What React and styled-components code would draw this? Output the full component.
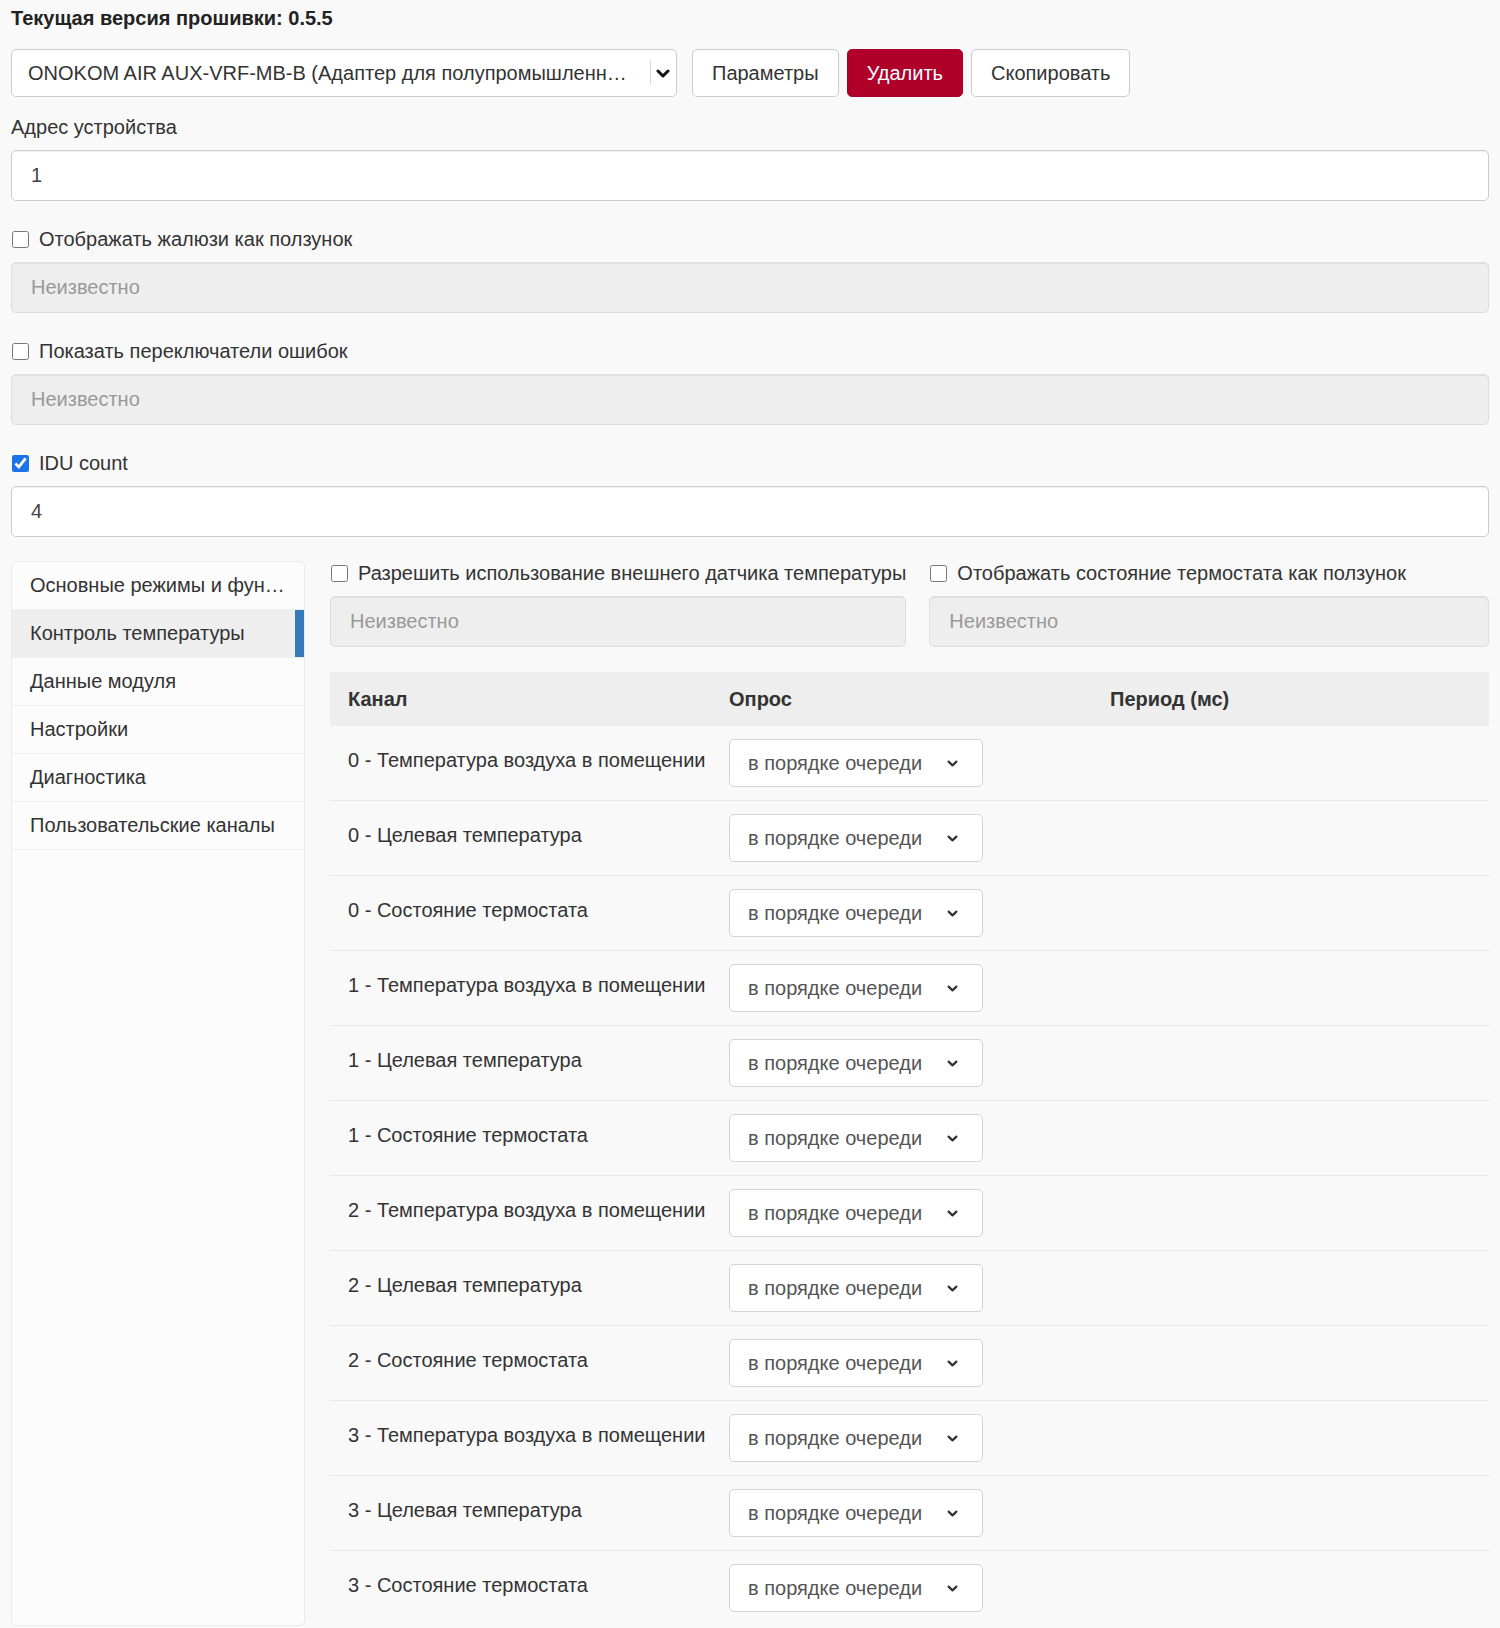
import React from 'react';
import styled, { createGlobalStyle } from 'styled-components';

const GlobalStyle = createGlobalStyle`
  html, body { margin: 0; padding: 0; background: #f9f9f9; }
  body {
    font-family: "Liberation Sans", Arial, sans-serif;
    font-size: 20px;
    line-height: 28px;
    color: #333;
  }
  *, *::before, *::after { box-sizing: border-box; }
`;

const Page = styled.div`
  padding: 4px 11px 2px 11px;
`;

const Title = styled.div`
  font-weight: bold;
  line-height: 28px;
  color: #222;
`;

const Toolbar = styled.div`
  display: flex;
  align-items: center;
  gap: 8px;
  margin-top: 17px;
`;

const DeviceSelect = styled.div`
  width: 666px;
  height: 48px;
  border: 1px solid #ccc;
  border-radius: 5px;
  background: #fff;
  display: flex;
  align-items: center;
  padding-left: 16px;
  margin-right: 7px;
`;

const SelectText = styled.span`
  flex: 1;
  min-width: 0;
  white-space: nowrap;
  overflow: hidden;
  text-overflow: ellipsis;
  color: #333;
  padding-right: 22px;
`;

const Separator = styled.span`
  width: 1px;
  height: 24px;
  background: #d6d6d6;
`;

const ChevronBox = styled.span`
  display: flex;
  align-items: center;
  justify-content: center;
  width: ${(p) => p.$w}px;
  margin: ${(p) => p.$m};
`;

const Button = styled.button`
  height: 48px;
  padding: 0 19px;
  border: 1px solid ${(p) => (p.$danger ? '#a80028' : '#ccc')};
  border-radius: 5px;
  background: ${(p) => (p.$danger ? '#b0002a' : '#fff')};
  color: ${(p) => (p.$danger ? '#fff' : '#333')};
  font-family: inherit;
  font-size: 20px;
  line-height: 28px;
  cursor: pointer;
`;

const Block = styled.div`
  margin-top: ${(p) => p.$top || 0}px;
  margin-bottom: ${(p) => (p.$bottom != null ? p.$bottom : 24)}px;
`;

const FieldLabel = styled.div`
  line-height: 28px;
  margin-bottom: 9px;
`;

const CheckLabel = styled.label`
  display: flex;
  align-items: center;
  gap: 10px;
  line-height: 28px;
  margin-bottom: 9px;
  white-space: nowrap;
`;

const CheckBox = styled.input`
  width: 17px;
  height: 17px;
  margin: 0 0 0 1px;
  accent-color: #1a73e8;
`;

const TextInput = styled.input`
  display: block;
  width: 100%;
  height: 51px;
  padding: 0 19px;
  border: 1px solid ${(p) => (p.disabled ? '#ddd' : '#ccc')};
  border-radius: 5px;
  background: ${(p) => (p.disabled ? '#eee' : '#fff')};
  color: #444;
  font-family: inherit;
  font-size: 20px;
  box-shadow: inset 0 1px 1px rgba(0, 0, 0, 0.06);
  outline: none;
  &::placeholder { color: #999; }
`;

const Lower = styled.div`
  display: flex;
  align-items: stretch;
  gap: 25px;
`;

const Sidebar = styled.nav`
  width: 294px;
  flex: none;
  margin-top: 2px;
  border: 1px solid #ebebeb;
  border-radius: 5px;
  background: #fcfcfc;
  overflow: hidden;
`;

const NavItem = styled.div`
  height: 48px;
  line-height: 47px;
  padding: 0 18px;
  border-bottom: 1px solid #eee;
  white-space: nowrap;
  overflow: hidden;
  text-overflow: ellipsis;
  background: ${(p) => (p.$active ? '#eee' : 'transparent')};
  box-shadow: ${(p) => (p.$active ? 'inset -9px 0 0 #337ab7' : 'none')};
`;

const RightCol = styled.div`
  flex: 1;
  min-width: 0;
`;

const OptionsRow = styled.div`
  display: flex;
  gap: 23px;
`;

const OptionGroup = styled.div`
  flex: ${(p) => (p.$grow ? '1' : 'none')};
  min-width: 0;
`;

const Table = styled.div`
  margin-top: 25px;
`;

const HeadRow = styled.div`
  display: grid;
  grid-template-columns: 381px 381px 1fr;
  height: 54px;
  padding-bottom: 1px;
  align-items: center;
  background: #eee;
  font-weight: bold;
`;

const HeadCell = styled.div`
  padding: 0 18px;
`;

const Row = styled.div`
  display: grid;
  grid-template-columns: 381px 381px 1fr;
  height: 75px;
  border-bottom: 1px solid #e8e8e8;
  &:last-child { border-bottom: none; }
`;

const NameCell = styled.div`
  padding: 20px 18px 0;
  white-space: nowrap;
`;

const PollCell = styled.div`
  padding: 13px 18px 0;
`;

const PollSelect = styled.div`
  width: 254px;
  height: 48px;
  border: 1px solid #d4d4d4;
  border-radius: 5px;
  background: #fff;
  display: flex;
  align-items: center;
  justify-content: space-between;
  padding: 0 24px 0 18px;
  color: #555;
`;

const Chevron = ({ w, h, sw, color }) => (
  <svg width={w} height={h} viewBox={`0 0 ${w} ${h}`} fill="none">
    <polyline
      points={`${sw / 2 + 0.5},${sw / 2 + 0.5} ${w / 2},${h - sw / 2 - 0.5} ${w - sw / 2 - 0.5},${sw / 2 + 0.5}`}
      stroke={color}
      strokeWidth={sw}
      strokeLinecap="round"
      strokeLinejoin="round"
    />
  </svg>
);

const navItems = [
  'Основные режимы и функции',
  'Контроль температуры',
  'Данные модуля',
  'Настройки',
  'Диагностика',
  'Пользовательские каналы',
];

const channelNames = [
  'Температура воздуха в помещении',
  'Целевая температура',
  'Состояние термостата',
];

const channels = [0, 1, 2, 3].flatMap((i) => channelNames.map((n) => `${i} - ${n}`));

export default function App() {
  return (
    <>
      <GlobalStyle />
      <Page>
        <Title>Текущая версия прошивки: 0.5.5</Title>
        <Toolbar>
          <DeviceSelect>
            <SelectText>ONOKOM AIR AUX-VRF-MB-B (Адаптер для полупромышленных кондиционеров)</SelectText>
            <Separator />
            <ChevronBox $w={14} $m="0 6px 0 5px">
              <Chevron w={14} h={9} sw={3} color="#111" />
            </ChevronBox>
          </DeviceSelect>
          <Button>Параметры</Button>
          <Button $danger>Удалить</Button>
          <Button>Скопировать</Button>
        </Toolbar>

        <Block $top={16}>
          <FieldLabel>Адрес устройства</FieldLabel>
          <TextInput defaultValue="1" />
        </Block>
        <Block>
          <CheckLabel><CheckBox type="checkbox" />Отображать жалюзи как ползунок</CheckLabel>
          <TextInput disabled placeholder="Неизвестно" />
        </Block>
        <Block>
          <CheckLabel><CheckBox type="checkbox" />Показать переключатели ошибок</CheckLabel>
          <TextInput disabled placeholder="Неизвестно" />
        </Block>
        <Block $bottom={22}>
          <CheckLabel><CheckBox type="checkbox" defaultChecked />IDU count</CheckLabel>
          <TextInput defaultValue="4" />
        </Block>

        <Lower>
          <Sidebar>
            {navItems.map((t, i) => (
              <NavItem key={t} $active={i === 1}>{t}</NavItem>
            ))}
          </Sidebar>
          <RightCol>
            <OptionsRow>
              <OptionGroup>
                <CheckLabel><CheckBox type="checkbox" />Разрешить использование внешнего датчика температуры</CheckLabel>
                <TextInput disabled placeholder="Неизвестно" />
              </OptionGroup>
              <OptionGroup $grow>
                <CheckLabel><CheckBox type="checkbox" />Отображать состояние термостата как ползунок</CheckLabel>
                <TextInput disabled placeholder="Неизвестно" />
              </OptionGroup>
            </OptionsRow>
            <Table>
              <HeadRow>
                <HeadCell>Канал</HeadCell>
                <HeadCell>Опрос</HeadCell>
                <HeadCell>Период (мс)</HeadCell>
              </HeadRow>
              {channels.map((c) => (
                <Row key={c}>
                  <NameCell>{c}</NameCell>
                  <PollCell>
                    <PollSelect>
                      <span>в порядке очереди</span>
                      <Chevron w={11} h={7} sw={2.2} color="#333" />
                    </PollSelect>
                  </PollCell>
                  <div />
                </Row>
              ))}
            </Table>
          </RightCol>
        </Lower>
      </Page>
    </>
  );
}
